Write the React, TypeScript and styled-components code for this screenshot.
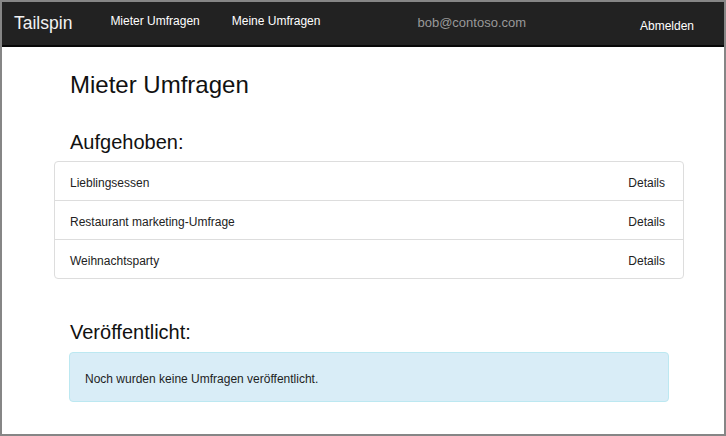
import React from "react";
import styled, { createGlobalStyle } from "styled-components";

const GlobalStyle = createGlobalStyle`
  html, body {
    margin: 0;
    padding: 0;
    background: #ffffff;
  }
  body {
    font-family: "Liberation Sans", Arial, sans-serif;
  }
`;

type Survey = {
  id: number;
  title: string;
};

const closedSurveys: Survey[] = [
  { id: 1, title: "Lieblingsessen" },
  { id: 2, title: "Restaurant marketing-Umfrage" },
  { id: 3, title: "Weihnachtsparty" },
];

const App: React.FC = (): JSX.Element => {
  return (
    <>
      <GlobalStyle />
      <Frame>
        <Navbar>
          <Brand>Tailspin</Brand>
          <NavLinks>
            <NavLink>Mieter Umfragen</NavLink>
            <NavLink>Meine Umfragen</NavLink>
          </NavLinks>
          <UserEmail>bob@contoso.com</UserEmail>
          <LogoutLink>Abmelden</LogoutLink>
        </Navbar>
        <Content>
          <PageTitle>Mieter Umfragen</PageTitle>
          <SectionTitle>Aufgehoben:</SectionTitle>
          <ListGroup>
            {closedSurveys.map((survey) => (
              <ListRow key={survey.id}>
                <RowText>{survey.title}</RowText>
                <RowLink>Details</RowLink>
              </ListRow>
            ))}
          </ListGroup>
          <SectionTitle spaced>Veröffentlicht:</SectionTitle>
          <InfoAlert>Noch wurden keine Umfragen veröffentlicht.</InfoAlert>
        </Content>
      </Frame>
    </>
  );
};

const Frame = styled.div`
  display: flex;
  flex-direction: column;
  box-sizing: border-box;
  width: 726px;
  height: 436px;
  border: 2px solid #868686;
  background-color: #ffffff;
  overflow: hidden;
`;

const Navbar = styled.nav`
  display: flex;
  flex-direction: row;
  align-items: center;
  flex-shrink: 0;
  height: 43px;
  padding-left: 12px;
  background-color: #222222;
  border-bottom: 2px solid #080808;
`;

const Brand = styled.div`
  font-size: 17.5px;
  color: #f2f2f2;
  margin-right: 38px;
  padding-bottom: 1px;
`;

const NavLinks = styled.div`
  display: flex;
  flex-direction: row;
  gap: 32px;
`;

const NavLink = styled.div`
  font-size: 12px;
  color: #ffffff;
  padding-bottom: 5px;
`;

const UserEmail = styled.div`
  margin-left: 97px;
  font-size: 13px;
  color: #999999;
  padding-bottom: 2px;
`;

const LogoutLink = styled.div`
  margin-left: auto;
  margin-right: 30px;
  font-size: 12px;
  color: #ffffff;
  padding-top: 4px;
`;

const Content = styled.main`
  display: flex;
  flex-direction: column;
  align-items: flex-start;
  padding-left: 52px;
`;

const PageTitle = styled.h1`
  margin: 25px 0 0 16px;
  font-size: 24px;
  font-weight: normal;
  line-height: 26px;
  color: #111111;
`;

const SectionTitle = styled.h2<{ spaced?: boolean }>`
  margin: ${({ spaced }) => (spaced ? "42px" : "33px")} 0 0 16px;
  font-size: 20px;
  font-weight: normal;
  line-height: 22px;
  color: #111111;
`;

const ListGroup = styled.div`
  display: flex;
  flex-direction: column;
  box-sizing: border-box;
  width: 630px;
  margin-top: 8px;
  border: 1px solid #dddddd;
  border-radius: 4px;
`;

const ListRow = styled.div`
  display: flex;
  flex-direction: row;
  align-items: center;
  justify-content: space-between;
  box-sizing: border-box;
  height: 38px;
  padding: 3px 18px 0 15px;
  font-size: 12px;
  color: #222222;

  & + & {
    height: 39px;
    border-top: 1px solid #dddddd;
  }
`;

const RowText = styled.span``;

const RowLink = styled.span`
  color: #222222;
`;

const InfoAlert = styled.div`
  display: flex;
  align-items: center;
  box-sizing: border-box;
  width: 600px;
  height: 50px;
  margin: 9px 0 0 15px;
  padding: 3px 15px 0;
  font-size: 12px;
  color: #1e1e1e;
  background-color: #d9edf7;
  border: 1px solid #bce8f1;
  border-radius: 4px;
`;

export default App;
